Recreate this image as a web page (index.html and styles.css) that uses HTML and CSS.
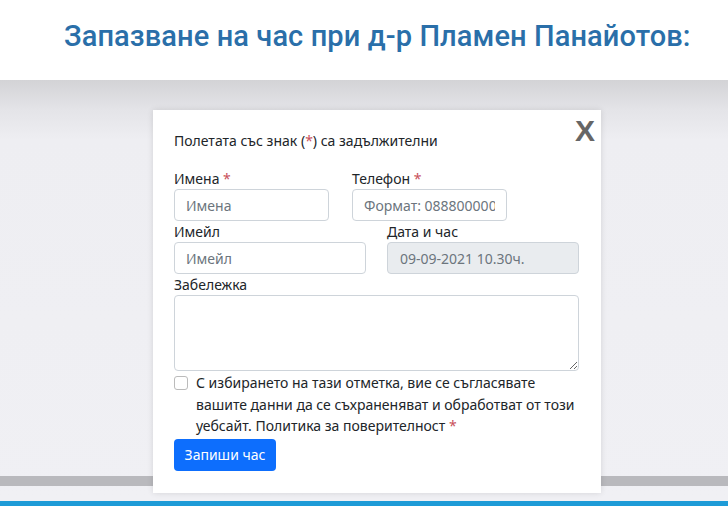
FILE: index.html
```html
<!DOCTYPE html>
<html lang="bg">
<head>
<meta charset="utf-8">
<link rel="stylesheet" href="styles.css">
</head>
<body>
<header class="top">
  <h1 class="title">Запазване на час при д-р Пламен Панайотов:</h1>
</header>
<main class="overlay">
  <div class="modal">
    <div class="close">X</div>
    <p class="note">Полетата със знак (<span class="req">*</span>) са задължителни</p>
    <div class="row row1">
      <div class="field">
        <label class="label">Имена <span class="req">*</span></label>
        <input class="input" type="text" placeholder="Имена">
      </div>
      <div class="field">
        <label class="label">Телефон <span class="req">*</span></label>
        <input class="input" type="text" placeholder="Формат: 0888000000">
      </div>
    </div>
    <div class="row row2">
      <div class="field">
        <label class="label">Имейл</label>
        <input class="input" type="text" placeholder="Имейл">
      </div>
      <div class="field">
        <label class="label">Дата и час</label>
        <input class="input disabled" type="text" value="09-09-2021 10.30ч." disabled>
      </div>
    </div>
    <div class="field">
      <label class="label">Забележка</label>
      <textarea class="textarea"></textarea>
    </div>
    <div class="check">
      <span class="box"></span>
      <span class="check-text">С избирането на тази отметка, вие се съгласявате вашите данни да се съхраненяват и обработват от този уебсайт. Политика за поверителност <span class="req">*</span></span>
    </div>
    <button class="btn">Запиши час</button>
  </div>
  <div class="band"></div>
  <div class="light"></div>
</main>
<div class="blue"></div>
</body>
</html>
```
FILE: styles.css
```css
* { box-sizing: border-box; }
html, body { margin: 0; padding: 0; }
body {
  width: 728px;
  height: 506px;
  overflow: hidden;
  font-family: "Noto Sans", "Open Sans", sans-serif;
  color: #212529;
  background: #eeeef2;
  display: flex;
  flex-direction: column;
}
.top {
  height: 80px;
  background: #fff;
  display: flex;
  align-items: center;
  padding: 0 0 8px 64px;
  flex: none;
}
.title {
  margin: 0;
  font-family: "Roboto", sans-serif;
  font-weight: 500;
  font-size: 29px;
  color: #2a6fa9;
  letter-spacing: 0.1px;
}
.overlay {
  position: relative;
  flex: 1;
  background: linear-gradient(#d3d3d6 0px, #e4e4e8 30px, #eeeef2 60px, #f0f0f4 100%);
  display: flex;
  flex-direction: column;
}
.band {
  position: absolute;
  left: 0; right: 0;
  top: 396px;
  height: 10px;
  background: #b9b9bd;
}
.modal {
  position: relative;
  z-index: 2;
  margin: 30px 0 0 153px;
  width: 448px;
  height: 383px;
  background: #fff;
  box-shadow: 0 0 6px rgba(0,0,0,0.12);
  padding: 20px 22px 0 21px;
  font-size: 14px;
}
.close {
  position: absolute;
  right: 6px;
  top: 4px;
  font-family: "Liberation Sans", sans-serif;
  font-weight: bold;
  font-size: 30px;
  color: #666;
}
.note {
  margin: 0 0 16px;
  font-size: 14px;
  line-height: 22px;
}
.req { color: #c8505a; }
.row { display: grid; }
.row1 { grid-template-columns: 155px 155px; column-gap: 23px; }
.row2 { grid-template-columns: 192px 192px; column-gap: 21px; }
.field { display: flex; flex-direction: column; }
.label {
  font-size: 14px;
  line-height: 21px;
  color: #212529;
}
.input {
  height: 32px;
  border: 1px solid #ced4da;
  border-radius: 4px;
  padding: 0 11px;
  font-family: inherit;
  font-size: 14px;
  color: #212529;
  background: #fff;
  width: 100%;
}
.input::placeholder { color: #6c757d; }
.input.disabled { background: #e9ecef; color: #6c757d; padding-left: 12px; }
.textarea {
  height: 76px;
  width: 405px;
  border: 1px solid #ced4da;
  border-radius: 4px;
  resize: vertical;
  font-family: inherit;
  display: block;
}
.check {
  display: flex;
  gap: 8px;
  margin-top: 1px;
}
.box {
  flex: none;
  width: 14px;
  height: 14px;
  border: 1px solid #bbb;
  border-radius: 3px;
  margin-top: 4px;
}
.check-text {
  font-size: 14px;
  line-height: 21.5px;
  width: 380px;
}
.btn {
  display: block;
  margin-top: 2px;
  width: 102px;
  height: 32px;
  background: #0d6efd;
  color: #fff;
  border: 0;
  border-radius: 4px;
  font-family: inherit;
  font-size: 14px;
}
.light { flex: 1; }
.blue {
  height: 5px;
  flex: none;
  background: #1e9bd7;
}
```
